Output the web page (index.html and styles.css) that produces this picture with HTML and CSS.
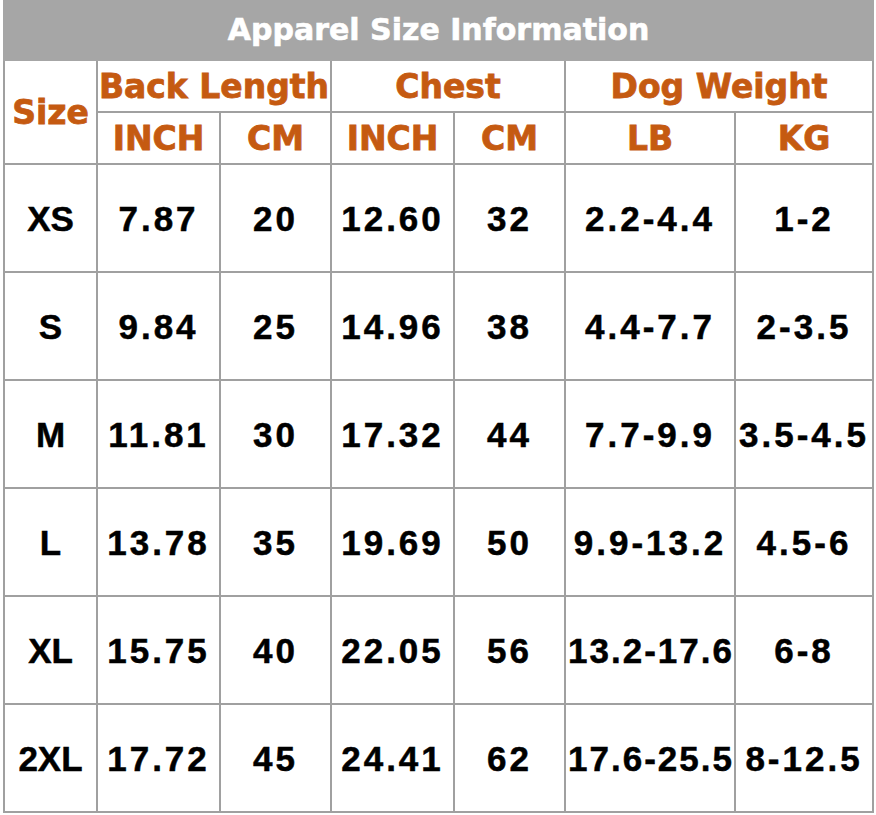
FILE: index.html
```html
<!DOCTYPE html>
<html>
<head>
<meta charset="utf-8">
<link rel="stylesheet" href="styles.css">
</head>
<body>
<div class="chart">
  <div class="title">Apparel Size Information</div>
  <div class="grid">
    <div class="cell head size-head">Size</div>
    <div class="cell head span2">Back Length</div>
    <div class="cell head span2">Chest</div>
    <div class="cell head span2">Dog Weight</div>
    <div class="cell head">INCH</div>
    <div class="cell head">CM</div>
    <div class="cell head">INCH</div>
    <div class="cell head">CM</div>
    <div class="cell head">LB</div>
    <div class="cell head">KG</div>

    <div class="cell size">XS</div><div class="cell">7.87</div><div class="cell">20</div><div class="cell">12.60</div><div class="cell">32</div><div class="cell">2.2-4.4</div><div class="cell">1-2</div>
    <div class="cell size">S</div><div class="cell">9.84</div><div class="cell">25</div><div class="cell">14.96</div><div class="cell">38</div><div class="cell">4.4-7.7</div><div class="cell">2-3.5</div>
    <div class="cell size">M</div><div class="cell">11.81</div><div class="cell">30</div><div class="cell">17.32</div><div class="cell">44</div><div class="cell">7.7-9.9</div><div class="cell">3.5-4.5</div>
    <div class="cell size">L</div><div class="cell">13.78</div><div class="cell">35</div><div class="cell">19.69</div><div class="cell">50</div><div class="cell">9.9-13.2</div><div class="cell">4.5-6</div>
    <div class="cell size">XL</div><div class="cell">15.75</div><div class="cell">40</div><div class="cell">22.05</div><div class="cell">56</div><div class="cell tight">13.2-17.6</div><div class="cell">6-8</div>
    <div class="cell size">2XL</div><div class="cell">17.72</div><div class="cell">45</div><div class="cell">24.41</div><div class="cell">62</div><div class="cell tight">17.6-25.5</div><div class="cell">8-12.5</div>
  </div>
</div>
</body>
</html>
```

FILE: styles.css
```css
html, body {
  margin: 0;
  padding: 0;
  background: #ffffff;
}

.chart {
  margin-left: 3px;
  width: 871px;
}

.title {
  height: 61px;
  background: #a6a6a6;
  color: #ffffff;
  font-family: "DejaVu Sans", sans-serif;
  font-weight: bold;
  font-size: 30px;
  -webkit-text-stroke: 0.6px #ffffff;
  display: flex;
  align-items: center;
  justify-content: center;
  padding-bottom: 2px;
  box-sizing: border-box;
}

.grid {
  display: grid;
  grid-template-columns: 93px 123px 111px 123px 111px 170px 138px;
  grid-template-rows: 52px 52px repeat(6, 108px);
  border-left: 2px solid #a0a0a0;
}

.cell {
  box-sizing: border-box;
  border-right: 2px solid #a0a0a0;
  border-bottom: 2px solid #a0a0a0;
  display: flex;
  align-items: center;
  justify-content: center;
  font-family: "Liberation Sans", Arial, sans-serif;
  font-weight: bold;
  font-size: 35px;
  letter-spacing: 3px;
  -webkit-text-stroke: 0.5px #000000;
  color: #000000;
  white-space: nowrap;
  padding-top: 2px;
}

.cell.size {
  letter-spacing: 0;
}

.cell.tight {
  letter-spacing: 2px;
  padding-left: 2px;
}

.head {
  font-family: "DejaVu Sans", sans-serif;
  font-size: 33px;
  letter-spacing: 0;
  color: #c55a11;
  -webkit-text-stroke: 0.8px #c55a11;
  padding-top: 0;
}

.size-head {
  grid-row: span 2;
}

.span2 {
  grid-column: span 2;
}
```
